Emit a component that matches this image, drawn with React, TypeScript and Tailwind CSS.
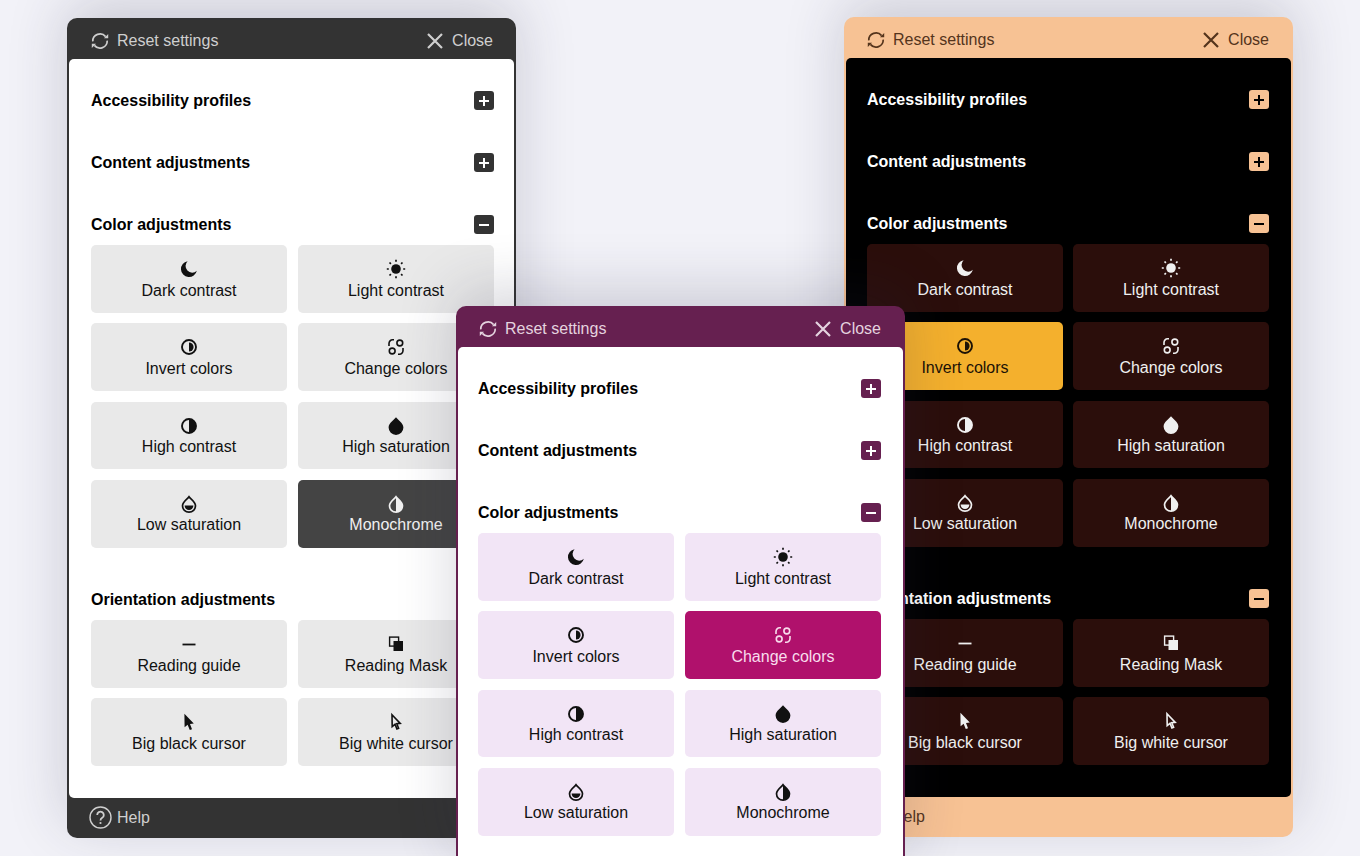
import type { ReactNode } from 'react'

type Theme = {
  frame: string
  headerText: string
  headerPad: string
  body: string
  bodyPad: string
  title: string
  toggle: string
  tile: string
  active: string
  gridGap: string
  footerPad: string
}

const dark: Theme = {
  frame: 'bg-[#333333]',
  headerText: 'text-[#cfcfcf]',
  headerPad: 'pl-[23px] pr-[23px]',
  body: 'bg-white',
  bodyPad: 'pl-[22px] pr-[20px]',
  title: 'text-black',
  toggle: 'bg-[#333333] text-white',
  tile: 'bg-[#e9e9e9] text-[#111111]',
  active: 'bg-[#444444] text-[#f0f0f0]',
  gridGap: 'gap-x-[11px]',
  footerPad: 'pl-[22px]',
}

const plum: Theme = {
  frame: 'bg-[#662050]',
  headerText: 'text-[#e4d3df]',
  headerPad: 'pl-[22px] pr-[24px]',
  body: 'bg-white',
  bodyPad: 'pl-[20px] pr-[22px]',
  title: 'text-black',
  toggle: 'bg-[#662050] text-white',
  tile: 'bg-[#f2e5f6] text-[#111111]',
  active: 'bg-[#b0116c] text-[#f8dcec]',
  gridGap: 'gap-x-[11px]',
  footerPad: 'pl-[20px]',
}

const peach: Theme = {
  frame: 'bg-[#f7c294]',
  headerText: 'text-[#54341c]',
  headerPad: 'pl-[22px] pr-[24px]',
  body: 'bg-black',
  bodyPad: 'pl-[21px] pr-[22px]',
  title: 'text-white',
  toggle: 'bg-[#f7c294] text-black',
  tile: 'bg-[#2b0e0b] text-[#f0f0f0]',
  active: 'bg-[#f4b02d] text-[#1c1206]',
  gridGap: 'gap-x-[10px]',
  footerPad: 'pl-[20px]',
}

const Svg = ({ size = 20, children }: { size?: number; children: ReactNode }) => (
  <svg width={size} height={size} viewBox="0 0 20 20" fill="none" className="shrink-0">
    {children}
  </svg>
)

const ResetIcon = () => (
  <Svg>
    <path d="M2.800 10.400A7.200 7.200 0 0 1 15.600 5.600" stroke="currentColor" strokeWidth="1.700" />
    <path d="M17.200 9.600A7.200 7.200 0 0 1 4.400 14.400" stroke="currentColor" strokeWidth="1.700" />
    <path d="M14 7.200h4.200V3zM6 12.800H1.800V17z" fill="currentColor" />
  </Svg>
)

const CloseIcon = () => (
  <Svg>
    <path d="M3 3l14 14M17 3L3 17" stroke="currentColor" strokeWidth="2.200" />
  </Svg>
)

const HelpIcon = () => (
  <svg width="23" height="23" viewBox="0 0 23 23" fill="none" className="shrink-0">
    <circle cx="11.500" cy="11.500" r="10.500" stroke="currentColor" strokeWidth="1.400" />
    <path d="M8.200 9a3.300 3.300 0 1 1 5 2.800c-1.100.7-1.700 1.200-1.700 2.600" stroke="currentColor" strokeWidth="1.800" />
    <circle cx="11.500" cy="17" r="1.100" fill="currentColor" />
  </svg>
)

const MoonIcon = () => (
  <Svg>
    <path d="M8.600 2.200a8 8 0 1 0 9.200 9.600 6.400 6.400 0 0 1-9.200-9.600z" fill="currentColor" />
  </Svg>
)

const SunIcon = () => (
  <Svg>
    <circle cx="10" cy="10" r="4.800" fill="currentColor" />
    <path
      d="M10 .8v2M10 17.200v2M.8 10h2M17.200 10h2M3.500 3.500l1.400 1.400M15.100 15.100l1.400 1.400M3.500 16.500l1.400-1.400M15.100 4.900l1.400-1.400"
      stroke="currentColor"
      strokeWidth="1.700"
    />
  </Svg>
)

const InvertIcon = () => (
  <Svg>
    <circle cx="10" cy="10" r="7" stroke="currentColor" strokeWidth="1.900" />
    <path d="M10 5.400a4.600 4.600 0 0 1 0 9.200z" fill="currentColor" />
  </Svg>
)

const ContrastIcon = () => (
  <Svg>
    <circle cx="10" cy="10" r="7" stroke="currentColor" strokeWidth="1.900" />
    <path d="M10 3a7 7 0 0 1 0 14z" fill="currentColor" />
  </Svg>
)

const SwapIcon = () => (
  <Svg>
    <path d="M3 9V6.400A3.600 3.600 0 0 1 6.600 2.800H8" stroke="currentColor" strokeWidth="1.600" />
    <path d="M17 11v2.600a3.600 3.600 0 0 1-3.600 3.600H12" stroke="currentColor" strokeWidth="1.600" />
    <circle cx="13.800" cy="6" r="2.900" stroke="currentColor" strokeWidth="1.600" />
    <circle cx="6.200" cy="14" r="2.900" stroke="currentColor" strokeWidth="1.600" />
  </Svg>
)

const drop = 'M10 1.200c1.200 2.200 7.400 5.400 7.400 10.400a7.400 7.400 0 0 1-14.800 0C2.600 6.600 8.800 3.400 10 1.200z'
const innerDrop = 'M10 2.800c1.200 1.900 6.400 4.800 6.500 8.900a6.500 6.500 0 0 1-13 0c.1-4.100 5.300-7 6.500-8.900z'

const DropIcon = () => (
  <Svg>
    <path d={drop} fill="currentColor" />
  </Svg>
)

const LowDropIcon = () => (
  <Svg>
    <path d={innerDrop} stroke="currentColor" strokeWidth="1.700" />
    <path d="M5.600 11.600h8.800a4.400 4.400 0 0 1-8.800 0z" fill="currentColor" />
  </Svg>
)

const HalfDropIcon = () => (
  <Svg>
    <path d={innerDrop} stroke="currentColor" strokeWidth="1.700" />
    <path d="M10 2.800c1.200 1.900 6.400 4.800 6.500 8.900a6.500 6.500 0 0 1-6.500 6.500z" fill="currentColor" />
  </Svg>
)

const GuideIcon = () => (
  <Svg>
    <path d="M3.500 10.500h13" stroke="currentColor" strokeWidth="1.800" />
  </Svg>
)

const MaskIcon = () => (
  <Svg>
    <rect x="3.600" y="3.100" width="9" height="9" stroke="currentColor" strokeWidth="1.400" />
    <rect x="7.500" y="7" width="9.500" height="10" fill="currentColor" />
  </Svg>
)

const BlackCursorIcon = () => (
  <Svg>
    <path d="M5.400 1.800l9.400 9.800-3.800.4 2 5.200-2.200.8-2.200-5.200-3 2.400z" fill="currentColor" />
  </Svg>
)

const WhiteCursorIcon = () => (
  <Svg>
    <path d="M6 2.800l8.200 8.600-3.400.3 1.800 4.600-1.700.6-1.900-4.600-2.800 2.300z" stroke="currentColor" strokeWidth="1.600" />
  </Svg>
)

const colorTiles = [
  { label: 'Dark contrast', icon: <MoonIcon /> },
  { label: 'Light contrast', icon: <SunIcon /> },
  { label: 'Invert colors', icon: <InvertIcon /> },
  { label: 'Change colors', icon: <SwapIcon /> },
  { label: 'High contrast', icon: <ContrastIcon /> },
  { label: 'High saturation', icon: <DropIcon /> },
  { label: 'Low saturation', icon: <LowDropIcon /> },
  { label: 'Monochrome', icon: <HalfDropIcon /> },
]

const orientationTiles = [
  { label: 'Reading guide', icon: <GuideIcon /> },
  { label: 'Reading Mask', icon: <MaskIcon /> },
  { label: 'Big black cursor', icon: <BlackCursorIcon /> },
  { label: 'Big white cursor', icon: <WhiteCursorIcon /> },
]

function Toggle({ theme, open }: { theme: Theme; open?: boolean }) {
  return (
    <span className={`mt-px flex h-[19.5px] w-5 items-center justify-center rounded-[3px] ${theme.toggle}`}>
      <svg width="12" height="12" viewBox="0 0 12 12" fill="none">
        <path d={open ? 'M1 6h10' : 'M1 6h10M6 1v10'} stroke="currentColor" strokeWidth="2" />
      </svg>
    </span>
  )
}

function SectionTitle({ title, theme, open }: { title: string; theme: Theme; open?: boolean }) {
  return (
    <div className="flex h-5 items-center justify-between">
      <h2 className={`pt-[2px] text-base font-bold ${theme.title}`}>{title}</h2>
      <Toggle theme={theme} open={open} />
    </div>
  )
}

function TileGrid({
  tiles,
  theme,
  activeLabel,
}: {
  tiles: { label: string; icon: ReactNode }[]
  theme: Theme
  activeLabel?: string
}) {
  return (
    <div className={`mt-[11px] grid grid-cols-2 gap-y-[10.67px] ${theme.gridGap}`}>
      {tiles.map((tile) => (
        <button
          key={tile.label}
          className={`flex h-[67.67px] flex-col items-center rounded-[5px] pt-[14px] text-base leading-5 ${
            tile.label === activeLabel ? theme.active : theme.tile
          }`}
        >
          {tile.icon}
          <span className="mt-[1.5px]">{tile.label}</span>
        </button>
      ))}
    </div>
  )
}

function Panel({
  theme,
  activeLabel,
  className,
  cutOff,
}: {
  theme: Theme
  activeLabel: string
  className: string
  cutOff?: boolean
}) {
  return (
    <section
      className={`absolute w-[449px] rounded-[10px] shadow-[0_-14px_60px_rgba(40,40,70,0.2)] ${theme.frame} ${className}`}
    >
      <header className={`flex h-[41px] items-center justify-between pt-[5px] text-base ${theme.headerPad} ${theme.headerText}`}>
        <span className="flex items-center gap-[7px]">
          <ResetIcon />
          Reset settings
        </span>
        <span className="flex items-center gap-[7px]">
          <CloseIcon />
          Close
        </span>
      </header>

      <div className={`mx-[2px] rounded-[5px] pb-[31.5px] pt-[31px] ${theme.bodyPad} ${theme.body}`}>
        <SectionTitle title="Accessibility profiles" theme={theme} />
        <div className="mt-[42px]">
          <SectionTitle title="Content adjustments" theme={theme} />
        </div>
        <div className="mt-[42px]">
          <SectionTitle title="Color adjustments" theme={theme} open />
          <TileGrid tiles={colorTiles} theme={theme} activeLabel={activeLabel} />
        </div>
        {/* the front panel runs off the bottom of the page, nothing below the colour tiles shows */}
        {!cutOff && (
          <div className="mt-[41.5px]">
            <SectionTitle title="Orientation adjustments" theme={theme} open />
            <TileGrid tiles={orientationTiles} theme={theme} activeLabel={activeLabel} />
          </div>
        )}
      </div>

      {!cutOff && (
        <footer className={`flex h-10 items-center gap-[5px] text-base ${theme.footerPad} ${theme.headerText}`}>
          <HelpIcon />
          Help
        </footer>
      )}
    </section>
  )
}

export default function App() {
  return (
    <div className="relative h-[856px] w-[1360px] overflow-hidden bg-[#f2f2f8] font-['Liberation_Sans',Arial,sans-serif]">
      <Panel theme={dark} activeLabel="Monochrome" className="left-[67px] top-[18px]" />
      <Panel theme={peach} activeLabel="Invert colors" className="left-[844px] top-[17px]" />
      <Panel theme={plum} activeLabel="Change colors" className="left-[456px] top-[306px]" cutOff />
    </div>
  )
}
